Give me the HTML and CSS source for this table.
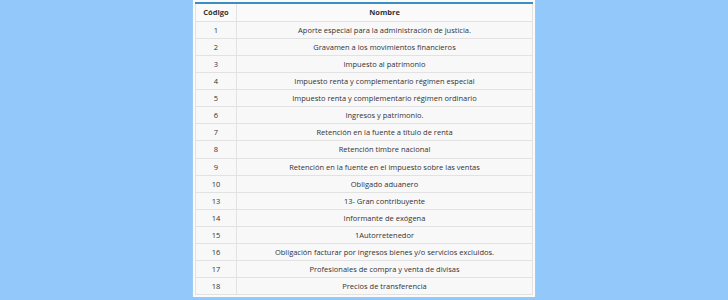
FILE: index.html
```html
<!DOCTYPE html>
<html lang="es">
<head>
<meta charset="utf-8">
<link rel="stylesheet" href="styles.css">
</head>
<body>
<div class="panel">
  <table class="tbl">
    <thead>
      <tr><th class="code">Código</th><th>Nombre</th></tr>
    </thead>
    <tbody>
      <tr><td>1</td><td>Aporte especial para la administración de justicia.</td></tr>
      <tr><td>2</td><td>Gravamen a los movimientos financieros</td></tr>
      <tr><td>3</td><td>Impuesto al patrimonio</td></tr>
      <tr><td>4</td><td>Impuesto renta y complementario régimen especial</td></tr>
      <tr><td>5</td><td>Impuesto renta y complementario régimen ordinario</td></tr>
      <tr><td>6</td><td>Ingresos y patrimonio.</td></tr>
      <tr><td>7</td><td>Retención en la fuente a título de renta</td></tr>
      <tr><td>8</td><td>Retención timbre nacional</td></tr>
      <tr><td>9</td><td>Retención en la fuente en el impuesto sobre las ventas</td></tr>
      <tr><td>10</td><td>Obligado aduanero</td></tr>
      <tr><td>13</td><td>13- Gran contribuyente</td></tr>
      <tr><td>14</td><td>Informante de exógena</td></tr>
      <tr><td>15</td><td>1Autorretenedor</td></tr>
      <tr><td>16</td><td>Obligación facturar por ingresos bienes y/o servicios excluidos.</td></tr>
      <tr><td>17</td><td>Profesionales de compra y venta de divisas</td></tr>
      <tr><td>18</td><td>Precios de transferencia</td></tr>
    </tbody>
  </table>
</div>
</body>
</html>
```
FILE: styles.css
```css
html, body {
  margin: 0;
  padding: 0;
  height: 300px;
  overflow: hidden;
  background: #93c8fa;
  font-family: "Open Sans", "DejaVu Sans", sans-serif;
}
.panel {
  width: 338px;
  margin: 0 auto;
  padding: 2px 2px 2px 2px;
  background: #fbfbfb;
  box-shadow: 0 0 1px #d0d4d8;
}
.tbl {
  width: 100%;
  border-collapse: collapse;
  border-top: 2px solid #3b8ec2;
  font-size: 7.5px;
  color: #333;
  background: #f8f8f8;
}
.tbl th, .tbl td {
  border: 1px solid #e2e2e2;
  text-align: center;
  padding: 0;
  line-height: 16.06px;
  height: 16.06px;
  white-space: nowrap;
}
.tbl th {
  font-weight: 700;
  height: 17px;
  line-height: 17px;
  background: #fafafa;
}
.tbl .code {
  width: 40px;
}
```
